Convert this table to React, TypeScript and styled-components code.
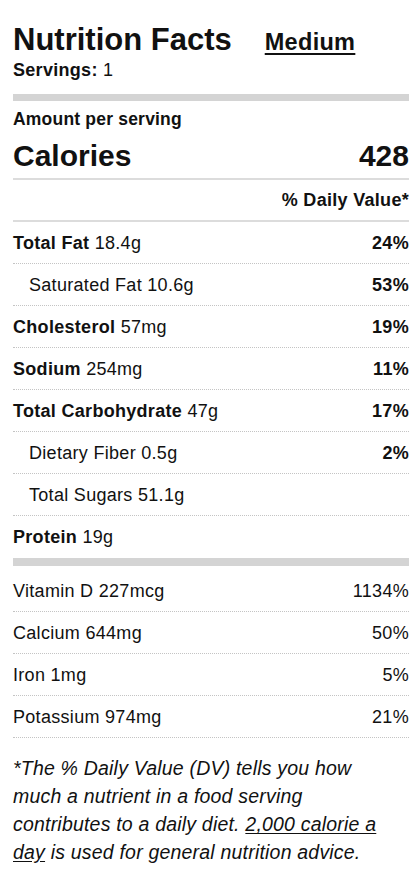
import styled, { createGlobalStyle } from "styled-components";

const GlobalStyle = createGlobalStyle`
  body {
    margin: 0;
    background: #fff;
    color: #111;
    font-family: "Liberation Sans", Arial, Helvetica, sans-serif;
  }
`;

interface RowProps {
  $indent?: boolean;
  $border?: boolean;
}

interface PctProps {
  $bold?: boolean;
}

interface BarProps {
  $height: number;
}

const Label = styled.div`
  padding: 21px 11px 0 13px;
  width: 420px;
  box-sizing: border-box;
`;

const Header = styled.div`
  display: flex;
  align-items: baseline;
  gap: 33px;
`;

const Title = styled.h1`
  margin: 0;
  font-size: 31px;
  line-height: 37px;
  font-weight: 700;
`;

const SizeLink = styled.a`
  font-size: 23.5px;
  font-weight: 700;
  letter-spacing: 0.3px;
  color: #111;
  text-decoration: underline;
  text-decoration-thickness: 2px;
  text-underline-offset: 3px;
`;

const Servings = styled.div`
  margin-top: 2px;
  font-size: 18px;
  line-height: 21px;
  letter-spacing: 0.3px;

  b {
    font-weight: 700;
  }
`;

const ThickBar = styled.div<BarProps>`
  height: ${(p) => p.$height}px;
  background: #d4d4d4;
`;

const TopBar = styled(ThickBar)`
  margin-top: 13px;
`;

const Amount = styled.div`
  margin-top: 8px;
  font-size: 17.5px;
  line-height: 20px;
  font-weight: 700;
  letter-spacing: 0.2px;
`;

const CaloriesRow = styled.div`
  margin-top: 10px;
  display: flex;
  justify-content: space-between;
  font-size: 30px;
  line-height: 34px;
  font-weight: 700;
  padding-bottom: 5px;
  border-bottom: 2px solid #dcdcdc;
`;

const DVRow = styled.div`
  display: flex;
  justify-content: flex-end;
  font-size: 18px;
  line-height: 21px;
  font-weight: 700;
  letter-spacing: 0.3px;
  padding: 10px 0 9px;
  border-bottom: 2px solid #dcdcdc;
`;

const Row = styled.div<RowProps>`
  display: flex;
  justify-content: space-between;
  font-size: 18px;
  line-height: 21px;
  letter-spacing: 0.3px;
  padding: 11px 0 ${(p) => (p.$border ? 9 : 10)}px ${(p) => (p.$indent ? 16 : 0)}px;
  border-bottom: ${(p) => (p.$border ? "1px dotted #c4c4c4" : "none")};
`;

const Name = styled.span`
  b {
    font-weight: 700;
  }
`;

const Pct = styled.span<PctProps>`
  font-weight: ${(p) => (p.$bold ? 700 : 400)};
`;

const Vitamins = styled.div`
  margin-top: 4px;
`;

const Footnote = styled.p`
  margin: 16px 0 0;
  font-size: 19.5px;
  line-height: 28px;
  letter-spacing: 0.2px;
  font-style: italic;

  u {
    text-underline-offset: 2px;
  }
`;

const nutrients = [
  { name: "Total Fat", amount: "18.4g", pct: "24%", bold: true },
  { name: "Saturated Fat", amount: "10.6g", pct: "53%", bold: false },
  { name: "Cholesterol", amount: "57mg", pct: "19%", bold: true },
  { name: "Sodium", amount: "254mg", pct: "11%", bold: true },
  { name: "Total Carbohydrate", amount: "47g", pct: "17%", bold: true },
  { name: "Dietary Fiber", amount: "0.5g", pct: "2%", bold: false },
  { name: "Total Sugars", amount: "51.1g", pct: "", bold: false },
  { name: "Protein", amount: "19g", pct: "", bold: true },
];

const vitamins = [
  { name: "Vitamin D", amount: "227mcg", pct: "1134%" },
  { name: "Calcium", amount: "644mg", pct: "50%" },
  { name: "Iron", amount: "1mg", pct: "5%" },
  { name: "Potassium", amount: "974mg", pct: "21%" },
];

export default function App() {
  return (
    <>
      <GlobalStyle />
      <Label>
        <Header>
          <Title>Nutrition Facts</Title>
          <SizeLink>Medium</SizeLink>
        </Header>
        <Servings>
          <b>Servings:</b> 1
        </Servings>
        <TopBar $height={7} />
        <Amount>Amount per serving</Amount>
        <CaloriesRow>
          <span>Calories</span>
          <span>428</span>
        </CaloriesRow>
        <DVRow>% Daily Value*</DVRow>
        {nutrients.map((n, i) => (
          <Row key={n.name} $indent={!n.bold} $border={i < nutrients.length - 1}>
            <Name>
              {n.bold ? <b>{n.name}</b> : n.name} {n.amount}
            </Name>
            <Pct $bold>{n.pct}</Pct>
          </Row>
        ))}
        <ThickBar $height={8} />
        <Vitamins>
          {vitamins.map((v) => (
            <Row key={v.name} $border>
              <Name>
                {v.name} {v.amount}
              </Name>
              <Pct>{v.pct}</Pct>
            </Row>
          ))}
        </Vitamins>
        <Footnote>
          *The % Daily Value (DV) tells you how
          <br />
          much a nutrient in a food serving
          <br />
          contributes to a daily diet. <u>2,000 calorie a</u>
          <br />
          <u>day</u> is used for general nutrition advice.
        </Footnote>
      </Label>
    </>
  );
}
